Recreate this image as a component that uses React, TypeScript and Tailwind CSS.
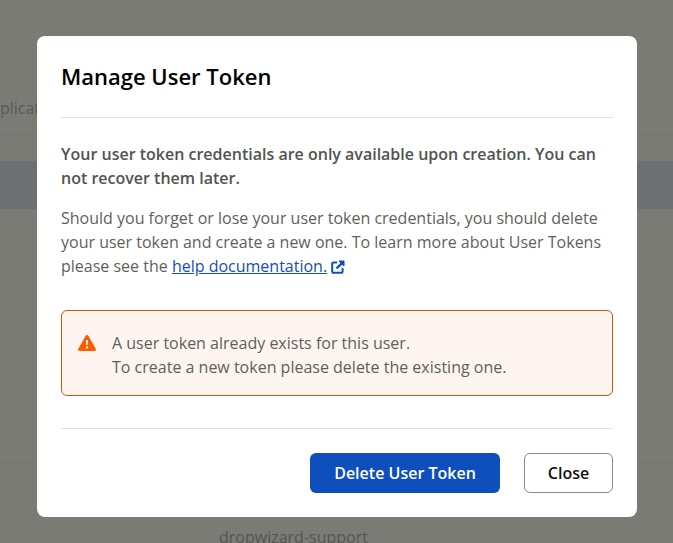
import React from 'react';

const rows = [
  { h: 'h-[25px]', cls: '' },
  { h: 'h-[48px]', cls: 'bg-[#6e6f72]' },
  { h: 'h-[51px]', cls: 'border-b border-[#777772]' },
  { h: 'h-[51px]', cls: 'border-b border-[#777772]' },
  { h: 'h-[51px]', cls: 'border-b border-[#777772]' },
  { h: 'h-[51px]', cls: 'border-b border-[#777772]' },
  { h: 'h-[51px]', cls: 'border-b border-[#777772]' },
  { h: 'h-[51px]', cls: 'border-b border-[#777772]' },
];

const WarningIcon = () => (
  <svg viewBox="0 0 18 16" className="mt-1 w-[18px] h-4 shrink-0" fill="#ff5c00">
    <path
      fillRule="evenodd"
      d="M7.7.8a1.5 1.5 0 0 1 2.6 0l7.4 12.9a1.5 1.5 0 0 1-1.3 2.3H1.6a1.5 1.5 0 0 1-1.3-2.3L7.7.8ZM8 5l.2 5h1.6L10 5H8Zm1 6.2a1.2 1.2 0 1 0 0 2.4 1.2 1.2 0 0 0 0-2.4Z"
    />
  </svg>
);

const ExternalIcon = () => (
  <svg viewBox="0 0 14 14" className="inline-block w-[14px] h-[14px] ml-1 align-[-2px]" fill="none" stroke="#0f4fbd">
    <path d="M6 2.4H2.4a1.2 1.2 0 0 0-1.2 1.2v8a1.2 1.2 0 0 0 1.2 1.2h8a1.2 1.2 0 0 0 1.2-1.2V8" strokeWidth="2" />
    <path d="M5.5 8.5 12.2 1.8" strokeWidth="2.4" />
    <path d="M8 1h5v5Z" fill="#0f4fbd" strokeWidth="1" />
  </svg>
);

export default function App() {
  return (
    <div className="relative h-[543px] w-[673px] overflow-hidden bg-[#7b7b75] font-['Open_Sans',sans-serif]">
      <div className="pt-[135px]">
        <div className="border-t border-[#777772]">
          {rows.map((row, i) => (
            <div key={i} className={`${row.h} ${row.cls}`} />
          ))}
        </div>
      </div>
      <div className="absolute left-[-20px] top-[98px] text-[16px] leading-[20px] text-[#5a5a55]">Applications</div>
      <div className="absolute left-[219px] top-[526px] text-[16px] leading-[22px] text-[#55554f]">dropwizard-support</div>

      <div className="absolute left-[37px] top-[36px] w-[600px] h-[481px] rounded-[8px] bg-white px-6 flex flex-col">
        <h2 className="mt-[25px] text-[22px] leading-[30px] font-semibold text-black">Manage User Token</h2>
        <div className="mt-[26px] border-t border-[#dde1f0]" />
        <p className="mt-[24px] text-[16px] leading-[24px] font-semibold text-[#53534e]">
          Your user token credentials are only available upon creation. You can not recover them later.
        </p>
        <p className="mt-[16px] text-[16px] leading-[24px] text-[#5f5f5a]">
          Should you forget or lose your user token credentials, you should delete your user token and create a new one. To learn more about User Tokens please see the{' '}
          <a className="text-[#0f4fbd] underline">help documentation.</a>
          <ExternalIcon />
        </p>
        <div className="mt-[32px] h-[86px] rounded-[6px] border border-[#c9590c] bg-[#fff5f0] flex items-start pt-5 px-4 gap-4">
          <WarningIcon />
          <div className="text-[16px] leading-[24px] text-[#5f5f5a]">
            <div>A user token already exists for this user.</div>
            <div>To create a new token please delete the existing one.</div>
          </div>
        </div>
        <div className="mt-[32px] border-t border-[#dde1f0]" />
        <div className="mt-[24px] flex justify-end gap-[24px]">
          <button className="h-10 w-[190px] rounded-[6px] bg-[#0f4fbd] text-[16px] font-semibold text-white">Delete User Token</button>
          <button className="h-10 w-[89px] rounded-[6px] border border-[#8a8a82] bg-white text-[16px] font-semibold text-[#111111]">Close</button>
        </div>
      </div>
    </div>
  );
}
